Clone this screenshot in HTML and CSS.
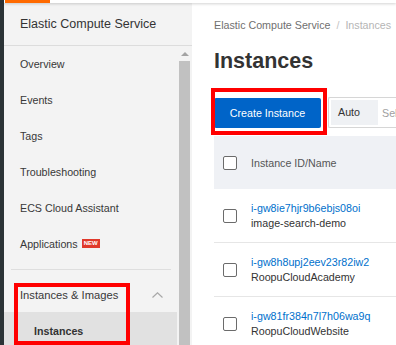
FILE: index.html
```html
<!DOCTYPE html>
<html lang="en">
<head>
    <meta charset="UTF-8">
    <meta name="viewport" content="width=device-width, initial-scale=1.0">
    <title>ECS Instances</title>
    <link rel="stylesheet" href="styles.css">
</head>
<body>

    <!-- Dark product rail on the far left -->
    <div class="rail"></div>

    <div class="app">
        <!-- Console top bar (mostly cut off) -->
        <div class="topbar"><span class="brand-bar"></span></div>

        <div class="workspace">
            <!-- Sidebar -->
            <aside class="sidebar">
                <div class="sidebar-title">Elastic Compute Service</div>
                <div class="sidebar-body">
                    <nav class="menu">
                        <a class="menu-item">Overview</a>
                        <a class="menu-item">Events</a>
                        <a class="menu-item">Tags</a>
                        <a class="menu-item">Troubleshooting</a>
                        <a class="menu-item">ECS Cloud Assistant</a>
                        <a class="menu-item">Applications <span class="badge">NEW</span></a>
                        <div class="menu-divider"></div>
                        <div class="menu-group">
                            <span>Instances &amp; Images</span>
                            <svg class="chevron" width="11" height="6" viewBox="0 0 11 6">
                                <path d="M0.5 5.5 L5.5 0.8 L10.5 5.5" fill="none" stroke="#a8a8a8" stroke-width="1.2"/>
                            </svg>
                        </div>
                        <a class="menu-item sub active">Instances</a>
                    </nav>
                    <div class="scrollbar">
                        <span class="scroll-arrow"></span>
                        <span class="scroll-thumb"></span>
                    </div>
                </div>
            </aside>

            <!-- Main content -->
            <main class="content">
                <div class="breadcrumb">
                    <span>Elastic Compute Service</span>
                    <span class="sep">/</span>
                    <span class="current">Instances</span>
                </div>
                <h1>Instances</h1>

                <div class="toolbar">
                    <button class="btn-primary">Create Instance</button>
                    <div class="search">
                        <span class="search-mode">Auto</span>
                        <span class="search-placeholder">Select</span>
                    </div>
                </div>

                <div class="table">
                    <div class="table-head">
                        <span class="checkbox"></span>
                        <span>Instance ID/Name</span>
                    </div>
                    <div class="table-row">
                        <span class="checkbox"></span>
                        <div class="cell">
                            <a class="link">i-gw8ie7hjr9b6ebjs08oi</a>
                            <span>image-search-demo</span>
                        </div>
                    </div>
                    <div class="table-row">
                        <span class="checkbox"></span>
                        <div class="cell">
                            <a class="link">i-gw8h8upj2eev23r82iw2</a>
                            <span>RoopuCloudAcademy</span>
                        </div>
                    </div>
                    <div class="table-row">
                        <span class="checkbox"></span>
                        <div class="cell">
                            <a class="link">i-gw81fr384n7l7h06wa9q</a>
                            <span>RoopuCloudWebsite</span>
                        </div>
                    </div>
                </div>
            </main>
        </div>
    </div>

    <!-- Red annotation boxes drawn over the screenshot -->
    <div class="highlight highlight-menu"></div>
    <div class="highlight highlight-button"></div>

</body>
</html>
```

FILE: styles.css
```css
/* Page */
body {
    font-family: 'Liberation Sans', Arial, sans-serif;
    margin: 0;
    height: 345px;
    overflow: hidden;
    display: flex;
    position: relative;
    background: #ffffff;
    color: #333333;
}

.rail {
    width: 4px;
    flex-shrink: 0;
    background: #2b3336;
}

.app {
    flex: 1;
    display: flex;
    flex-direction: column;
    min-width: 0;
}

/* Top bar */
.topbar {
    height: 3px;
    flex-shrink: 0;
    background: #ffffff;
    box-shadow: 0 1px 3px rgba(0, 0, 0, 0.18);
    position: relative;
    z-index: 2;
    display: flex;
}

.brand-bar {
    width: 45px;
    margin-left: 1px;
    background: #ff6a00;
}

.workspace {
    flex: 1;
    display: flex;
    min-height: 0;
}

/* Sidebar */
.sidebar {
    width: 188px;
    flex-shrink: 0;
    background: #f3f3f3;
    display: flex;
    flex-direction: column;
}

.sidebar-title {
    height: 42px;
    line-height: 42px;
    padding-left: 16px;
    font-size: 12.5px;
    color: #333333;
    border-bottom: 1px solid #dcdcdc;
}

.sidebar-body {
    flex: 1;
    display: flex;
}

.menu {
    width: 173px;
    display: flex;
    flex-direction: column;
}

.menu-item {
    height: 36px;
    line-height: 36px;
    padding-left: 16px;
    font-size: 10.7px;
    color: #383838;
    display: flex;
    align-items: center;
    gap: 4px;
}

.badge {
    background: #e0392b;
    color: #ffffff;
    font-size: 6px;
    font-weight: bold;
    line-height: 9px;
    padding: 0 2px;
    margin-top: -1px;
}

.menu-divider {
    height: 1px;
    margin: 7px 6px 0 7px;
    background: #dedede;
}

.menu-group {
    height: 34px;
    padding-top: 8px;
    padding-left: 16px;
    padding-right: 14px;
    display: flex;
    align-items: center;
    justify-content: space-between;
    font-size: 11.2px;
    color: #383838;
}

.menu-item.sub {
    padding-left: 30px;
    height: 38px;
}

.menu-item.active {
    background: #e1e1e1;
    font-weight: bold;
    color: #333333;
}

/* Scrollbar */
.scrollbar {
    width: 11px;
    padding: 0 1px 0 2px;
    display: flex;
    flex-direction: column;
    align-items: center;
}

.scroll-arrow {
    width: 0;
    height: 0;
    margin-top: 6px;
    border-left: 4px solid transparent;
    border-right: 4px solid transparent;
    border-bottom: 4px solid #a3a3a3;
}

.scroll-thumb {
    width: 11px;
    flex: 1;
    margin-top: 5px;
    background: #c1c1c1;
}

/* Main content */
.content {
    flex: 1;
    padding-left: 22px;
    min-width: 0;
    overflow: hidden;
}

.breadcrumb {
    margin-top: 14px;
    height: 16px;
    line-height: 16px;
    font-size: 10.7px;
    color: #6f6f6f;
    white-space: nowrap;
}

.breadcrumb .sep {
    color: #c4c4c4;
    margin: 0 3px;
}

.breadcrumb .current {
    color: #b5b5b5;
}

h1 {
    margin: 16px 0 0;
    font-size: 21.5px;
    line-height: 25px;
    color: #333333;
}

.toolbar {
    margin-top: 23px;
    display: flex;
    align-items: center;
    gap: 7px;
}

.btn-primary {
    width: 107px;
    height: 30px;
    border: none;
    border-radius: 2px;
    background: #0064c8;
    color: #ffffff;
    font-family: inherit;
    font-size: 10.7px;
    padding: 0;
    flex-shrink: 0;
}

.search {
    height: 27px;
    border: 1px solid #d6d6d6;
    border-right: none;
    border-radius: 2px 0 0 2px;
    padding: 1px 2px;
    display: flex;
    align-items: center;
    flex: 1;
    white-space: nowrap;
    font-size: 10.7px;
}

.search-mode {
    width: 47px;
    height: 25px;
    line-height: 25px;
    padding-left: 7px;
    box-sizing: border-box;
    background: #eff1f4;
    color: #333333;
}

.search-placeholder {
    margin-left: 4px;
    color: #a0a0a0;
}

/* Table */
.table {
    margin-top: 8px;
    font-size: 10.7px;
}

.table-head {
    height: 53px;
    background: #eff1f5;
    display: flex;
    align-items: center;
    gap: 14px;
    padding-left: 9px;
    color: #555555;
}

.table-row {
    height: 53px;
    border-bottom: 1px solid #e6e6e6;
    display: flex;
    align-items: center;
    gap: 14px;
    padding-left: 9px;
}

.checkbox {
    width: 12px;
    height: 12px;
    border: 1px solid #6b6b6b;
    border-radius: 2px;
    background: #ffffff;
    flex-shrink: 0;
}

.cell {
    display: flex;
    flex-direction: column;
    line-height: 15px;
    color: #333333;
    white-space: nowrap;
}

.link {
    color: #0070cc;
}

/* Red annotation boxes */
.highlight {
    position: absolute;
    border: 4px solid #ff0000;
    box-sizing: border-box;
    z-index: 5;
}

.highlight-menu {
    left: 14px;
    top: 283px;
    width: 116px;
    height: 62px;
}

.highlight-button {
    left: 211px;
    top: 88px;
    width: 116px;
    height: 47px;
}
```
